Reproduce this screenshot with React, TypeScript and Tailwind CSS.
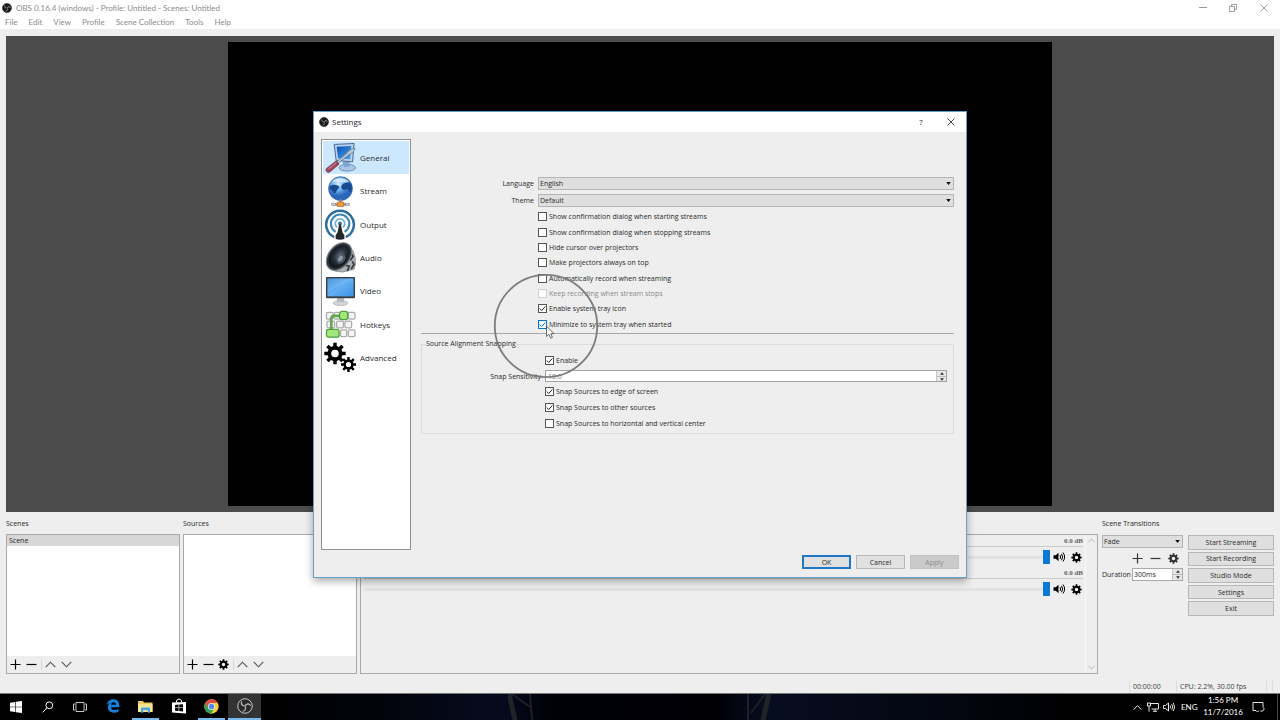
import type { ReactNode } from "react";

function gearPath(cx: number, cy: number, outer: number, root: number, hole: number, teeth: number) {
  const step = (Math.PI * 2) / teeth;
  const pt = (r: number, a: number) => `${(cx + r * Math.cos(a)).toFixed(2)} ${(cy + r * Math.sin(a)).toFixed(2)}`;
  let d = "";
  for (let i = 0; i < teeth; i++) {
    const a = i * step - Math.PI / 2;
    d += `${i === 0 ? "M" : "L"}${pt(root, a - step * 0.3)}L${pt(outer, a - step * 0.2)}L${pt(outer, a + step * 0.2)}L${pt(root, a + step * 0.3)}`;
  }
  d += `ZM${cx - hole} ${cy}a${hole} ${hole} 0 1 0 ${hole * 2} 0a${hole} ${hole} 0 1 0 ${-hole * 2} 0Z`;
  return d;
}

const SMALL_GEAR = gearPath(12, 12, 11.5, 8.6, 3.8, 8);

function Gear({ className = "size-[11px]" }: { className?: string }) {
  return (
    <svg viewBox="0 0 24 24" className={className} fill="currentColor" fillRule="evenodd" aria-hidden="true">
      <path d={SMALL_GEAR} />
    </svg>
  );
}

function Plus() {
  return (
    <svg viewBox="0 0 11 11" className="size-[11px]" stroke="currentColor" strokeWidth="1.2" aria-hidden="true">
      <path d="M5.5 .5v10M.5 5.5h10" />
    </svg>
  );
}

function Minus() {
  return (
    <svg viewBox="0 0 11 11" className="size-[11px]" stroke="currentColor" strokeWidth="1.2" aria-hidden="true">
      <path d="M.5 5.5h10" />
    </svg>
  );
}

function Chevron({ up = false, className = "size-[11px]" }: { up?: boolean; className?: string }) {
  return (
    <svg viewBox="0 0 11 11" className={className} fill="none" stroke="currentColor" strokeWidth="1.1" aria-hidden="true">
      <path d={up ? "M.7 8.2l4.8-5 4.8 5" : "M.7 2.8l4.8 5 4.8-5"} />
    </svg>
  );
}

function Speaker() {
  return (
    <svg viewBox="0 0 24 20" className="h-[10px] w-3" aria-hidden="true">
      <path d="M1 6.500h4.500L11 1.500v17L5.500 13.500H1z" fill="#000" />
      <path d="M14 6q2.500 4 0 8M17 3.500q4.500 6.500 0 13M20 1q6.500 9 0 18" fill="none" stroke="#000" strokeWidth="2" />
    </svg>
  );
}

const BLADE = "M10.500 5.500c-2 5.500.5 9 5.500 9.800l.5 1.700c-5 .5-9.500-3-9-7.500.3-2 1.500-3.300 3-4z";

function ObsLogo({ className, tone = "dark" }: { className: string; tone?: "dark" | "outline" }) {
  const outline = tone === "outline";
  return (
    <svg viewBox="0 0 32 32" className={className} aria-hidden="true">
      <circle cx="16" cy="16" r="14.500" fill={outline ? "#2a2a2b" : "#17181a"} stroke={outline ? "#c9c9c9" : "#2b2c2e"} strokeWidth="2" />
      <g fill={outline ? "#b9b9b9" : "#85878a"}>
        <path d={BLADE} />
        <path d={BLADE} transform="rotate(120 16 16)" />
        <path d={BLADE} transform="rotate(240 16 16)" />
      </g>
    </svg>
  );
}

function IconButton({ label, children, className = "" }: { label: string; children: ReactNode; className?: string }) {
  return (
    <button type="button" aria-label={label} className={`flex h-4 items-center justify-center ${className}`}>
      {children}
    </button>
  );
}

function Select({ id, value, className = "" }: { id: string; value: string; className?: string }) {
  return (
    <div className={`relative ${className}`}>
      <select id={id} defaultValue={value} className="block h-[13px] w-full appearance-none border border-[#b4b4b4] bg-[#dfdfdf] pl-px text-[7px] leading-[11px] outline-none">
        <option>{value}</option>
      </select>
      <svg viewBox="0 0 6 4" className="pointer-events-none absolute top-[5px] right-[3px] h-[3px] w-[5px]" aria-hidden="true">
        <path d="M0 0h6L3 4z" fill="#000" />
      </svg>
    </div>
  );
}

function SpinArrows() {
  return (
    <span className="flex w-[10px] flex-col border-l border-[#c8c8c8] bg-[#e6e6e6]">
      <button type="button" aria-label="Increase" className="flex flex-1 items-center justify-center border-b border-[#bdbdbd]">
        <svg viewBox="0 0 6 4" className="h-[3px] w-1"><path d="M0 4h6L3 0z" fill="#333" /></svg>
      </button>
      <button type="button" aria-label="Decrease" className="flex flex-1 items-center justify-center">
        <svg viewBox="0 0 6 4" className="h-[3px] w-1"><path d="M0 0h6L3 4z" fill="#333" /></svg>
      </button>
    </span>
  );
}

type CheckProps = { label: string; checked?: boolean; disabled?: boolean; hot?: boolean };

function Check({ label, checked = false, disabled = false, hot = false }: CheckProps) {
  const box = disabled ? "border-[#cfcfcf]" : hot ? "border-[#0078d7]" : "border-[#555]";
  return (
    <label className={`flex items-center gap-[2px] ${disabled ? "text-[#8b8b8b]" : ""}`}>
      <span className="grid size-[9px] *:col-start-1 *:row-start-1">
        <input type="checkbox" defaultChecked={checked} disabled={disabled} className={`peer size-[9px] appearance-none border bg-white ${box}`} />
        <svg viewBox="0 0 9 9" className={`pointer-events-none invisible size-[9px] peer-checked:visible ${hot ? "text-[#0078d7]" : "text-[#222]"}`} fill="none" stroke="currentColor" strokeWidth="1">
          <path d="M1.800 4.600l1.900 1.900 3.600-4" />
        </svg>
      </span>
      <span className="whitespace-nowrap">{label}</span>
    </label>
  );
}

const GeneralIcon = () => (
  <svg viewBox="0 0 32 32" className="size-[31px]">
    <defs>
      <linearGradient id="gscreen" x1="0" y1="0" x2="1" y2="1"><stop offset="0" stopColor="#0c4fae" /><stop offset="1" stopColor="#4aa5f0" /></linearGradient>
    </defs>
    <ellipse cx="23" cy="26.500" rx="8.500" ry="3.600" fill="#a9c6e6" stroke="#5b7da8" strokeWidth=".8" />
    <path d="M18 20h7l1 5-6 1z" fill="#7fa3cd" />
    <path d="M9.500 2.500L30 1.500l-1.500 19-17-1.500z" fill="#b6d0ee" stroke="#47658e" />
    <path d="M12 5l15-.8-1 13.500-12.500-1z" fill="url(#gscreen)" />
    <path d="M31 6.500c-4 0-6 2-9.500 6L10 22l1.500 1.500 11.500-9c4-3 7.500-4 8-8z" fill="#b9c8d6" stroke="#5c6d80" strokeWidth=".7" />
    <path d="M11.500 19.500l3 3.300-9 7.700c-2.500 2-5.500-.5-4-3z" fill="#a2445c" stroke="#6a2840" strokeWidth=".8" />
    <path d="M11.500 21.500L3.500 28" stroke="#d893a4" />
  </svg>
);

const StreamIcon = () => (
  <svg viewBox="0 0 32 32" className="size-[31px]">
    <defs>
      <radialGradient id="globe" cx=".4" cy=".3"><stop offset="0" stopColor="#d6ecff" /><stop offset=".55" stopColor="#6fb0f0" /><stop offset="1" stopColor="#2a66bb" /></radialGradient>
    </defs>
    <circle cx="16" cy="13" r="12.300" fill="url(#globe)" stroke="#2c5ea5" strokeWidth=".8" />
    <path d="M4.500 11c2-2 6-2.500 9-1 2.500 1.500 0 3-1 4.500-1 1-1 3-2.500 3.500-2 0-2-3-3.500-3.500-1.500-.5-2-2-2-3.500zM17 10c2-3 6-4 10-1.500 1.500 3 1 6-.5 8-2 .5-1.500-2.500-3.500-3-2-.3-2 2-4 1-1.500-1-3-3-2-4.500z" fill="#184b8f" />
    <path d="M7 6c4-4.500 13-5 18 0-5 1.500-12-1.500-18 0z" fill="#e9f5ff" opacity=".75" />
    <path d="M16 24v4M7 29.500h18" stroke="#8a8d92" strokeWidth="2" />
    <rect x="12.500" y="26.800" width="7" height="5" rx="1" fill="#f09a3e" stroke="#a65d15" strokeWidth=".7" />
    <rect x="7" y="28" width="4" height="2.600" fill="#cfd2d6" stroke="#777" strokeWidth=".5" />
    <rect x="21" y="28" width="4" height="2.600" fill="#cfd2d6" stroke="#777" strokeWidth=".5" />
  </svg>
);

const OutputIcon = () => (
  <svg viewBox="0 0 32 32" className="size-[31px]">
    <g fill="none">
      <path d="M9.500 29a14.300 14.300 0 1 1 12 0" stroke="#2f6d9d" strokeWidth="2.600" />
      <path d="M11 23.500a9.500 9.500 0 1 1 9.200 0" stroke="#3f86b8" strokeWidth="2.200" />
      <path d="M12.500 19a4.900 4.900 0 1 1 6 0" stroke="#6fb0d8" strokeWidth="1.800" />
    </g>
    <circle cx="15.500" cy="15" r="2" fill="#3b6f96" />
    <path d="M14.500 16h2l1.500 8 2 3v4q-4.500 1.500-9 0v-4l2-3z" fill="#23262a" />
  </svg>
);

const AudioIcon = () => (
  <svg viewBox="0 0 32 32" className="size-[31px]">
    <defs>
      <radialGradient id="cone" cx=".5" cy=".45"><stop offset="0" stopColor="#66707c" /><stop offset=".5" stopColor="#2b3440" /><stop offset="1" stopColor="#11161c" /></radialGradient>
    </defs>
    <path d="M25 5c6 4 8 15 5 23l-12 3-8-1z" fill="#aeb2b6" stroke="#6b6f73" strokeWidth=".7" />
    <path d="M27 12l2 3-3 4M28 20l2 3-3 5M21 24l4 1-2 5" stroke="#34383c" strokeWidth="1.800" fill="none" />
    <ellipse cx="14.500" cy="15" rx="11" ry="16" transform="rotate(38 14.500 15)" fill="#30373f" stroke="#7d848b" strokeWidth="1" />
    <ellipse cx="14.500" cy="15" rx="9" ry="13.500" transform="rotate(38 14.500 15)" fill="url(#cone)" />
    <ellipse cx="16.500" cy="17.500" rx="4" ry="5.500" transform="rotate(38 16.500 17.500)" fill="#4d5660" />
    <ellipse cx="16" cy="17" rx="2.200" ry="3.200" transform="rotate(38 16 17)" fill="#8c959f" />
  </svg>
);

const VideoIcon = () => (
  <svg viewBox="0 0 32 32" className="size-[31px]">
    <defs>
      <linearGradient id="vscreen" x1="0" y1="0" x2="1" y2="1"><stop offset="0" stopColor="#2f86dc" /><stop offset=".5" stopColor="#62aef3" /><stop offset="1" stopColor="#3c92e6" /></linearGradient>
    </defs>
    <ellipse cx="16" cy="28" rx="7.500" ry="2.500" fill="#d4d6d9" stroke="#a5a8ac" strokeWidth=".7" />
    <path d="M12.500 22h7l.5 5h-8z" fill="#b8bbbf" />
    <rect x="1" y="1" width="30" height="22" rx="1" fill="#3b4046" />
    <rect x="2.500" y="2.500" width="27" height="18.500" fill="url(#vscreen)" />
    <path d="M2.500 2.500h27L2.500 17z" fill="#fff" opacity=".14" />
  </svg>
);

const HotkeysIcon = () => (
  <svg viewBox="0 0 32 32" className="size-[31px]">
    <g fill="#f4f4f4" stroke="#a9aba9" strokeWidth="1.300">
      <rect x="1.500" y="3.500" width="7" height="7" rx="1.500" />
      <rect x="9.500" y="3.500" width="6" height="7" rx="1.500" />
      <rect x="24" y="3.500" width="7" height="7" rx="1.500" />
      <rect x="2" y="12.500" width="8" height="7" rx="1.500" />
      <rect x="12" y="12.500" width="7" height="7" rx="1.500" />
      <rect x="20.500" y="12.500" width="7" height="7" rx="1.500" />
      <rect x="16" y="21.500" width="6.500" height="7" rx="1.500" />
      <rect x="24" y="21.500" width="7" height="7" rx="1.500" />
    </g>
    <path d="M6.500 21V10q0-3 3-3h7" fill="none" stroke="#63a852" strokeWidth="2.800" />
    <g fill="#a5e57d" stroke="#4f9f3a" strokeWidth="1.300">
      <rect x="15" y="2.500" width="8.500" height="8.500" rx="2.500" />
      <rect x="1.500" y="21" width="13" height="8" rx="2" />
    </g>
  </svg>
);

const AdvancedIcon = () => (
  <svg viewBox="0 0 32 32" className="size-8" fillRule="evenodd">
    <path d={gearPath(11, 11.5, 10.8, 7.6, 3.8, 8)} />
    <path d={gearPath(24.5, 22.5, 7.6, 5.2, 2.6, 8)} />
  </svg>
);

const CATEGORIES: { name: string; icon: () => ReactNode }[] = [
  { name: "General", icon: GeneralIcon },
  { name: "Stream", icon: StreamIcon },
  { name: "Output", icon: OutputIcon },
  { name: "Audio", icon: AudioIcon },
  { name: "Video", icon: VideoIcon },
  { name: "Hotkeys", icon: HotkeysIcon },
  { name: "Advanced", icon: AdvancedIcon },
];

const GENERAL_CHECKS: CheckProps[] = [
  { label: "Show confirmation dialog when starting streams" },
  { label: "Show confirmation dialog when stopping streams" },
  { label: "Hide cursor over projectors" },
  { label: "Make projectors always on top" },
  { label: "Automatically record when streaming" },
  { label: "Keep recording when stream stops", disabled: true },
  { label: "Enable system tray icon", checked: true },
  { label: "Minimize to system tray when started", checked: true, hot: true },
];

function SettingsDialog() {
  return (
    <section role="dialog" aria-label="Settings" className="absolute top-[111px] left-1/2 flex h-[467px] w-[654px] -translate-x-1/2 flex-col border border-[#5fa3cf] bg-[#eee] shadow-[0_3px_8px_rgba(0,0,0,0.35)]">
      <header className="flex h-5 items-center bg-white pl-[5px] text-[8px]">
        <ObsLogo className="size-[10px]" />
        <h2 className="ml-[3px] flex-1">Settings</h2>
        <button type="button" aria-label="Help" className="w-[30px] text-[8px]">?</button>
        <button type="button" aria-label="Close" className="flex w-[30px] justify-center">
          <svg viewBox="0 0 8 8" className="size-2" stroke="#333" strokeWidth=".9"><path d="M.5.500l7 7M7.500.500l-7 7" /></svg>
        </button>
      </header>
      <div className="flex min-h-0 flex-1 px-[7px] pt-[7px]">
        <nav className="h-[411px] w-[90px] border border-[#8d9199] bg-white p-px">
          <ul className="grid h-[234px] grid-rows-7">
            {CATEGORIES.map(({ name, icon: Icon }, i) => (
              <li key={name} className="min-h-0">
                <button type="button" className={`flex h-full w-full items-center gap-1 pl-px text-[8px] ${i === 0 ? "bg-[#cce8ff]" : ""}`}>
                  <span className="flex w-8 shrink-0 justify-center"><Icon /></span>
                  {name}
                </button>
              </li>
            ))}
          </ul>
        </nav>
        <form className="ml-[10px] flex flex-1 flex-col pt-[38px] pr-[5px]">
          <div className="grid grid-cols-[113px_1fr] items-center gap-x-1 gap-y-1">
            <label htmlFor="language" className="text-right">Language</label>
            <Select id="language" value="English" />
            <label htmlFor="theme" className="text-right">Theme</label>
            <Select id="theme" value="Default" />
          </div>
          <div className="mt-[2px] ml-[117px] grid h-[123px] grid-rows-8">
            {GENERAL_CHECKS.map((c) => <Check key={c.label} {...c} />)}
          </div>
          <hr className="mt-px border-t border-[#a8a8a8]" />
          <fieldset className="mt-[5px] min-w-0 border border-[#dcdcdc] pr-[6px] pb-[2px]">
            <legend className="ml-[4px] h-[10px] leading-[10px]">Source Alignment Snapping</legend>
            <div className="mt-1 grid h-[78px] grid-cols-[119px_1fr] grid-rows-5 items-center gap-x-[4px]">
              <span className="col-start-2"><Check label="Enable" checked /></span>
              <label htmlFor="sensitivity" className="text-right">Snap Sensitivity</label>
              <span className="flex h-3 border border-[#a2a2a2] bg-white">
                <input id="sensitivity" defaultValue="10.0" className="min-w-0 flex-1 pl-[2px] text-[7px] leading-none text-[#777] outline-none" />
                <SpinArrows />
              </span>
              <span className="col-start-2"><Check label="Snap Sources to edge of screen" checked /></span>
              <span className="col-start-2"><Check label="Snap Sources to other sources" checked /></span>
              <span className="col-start-2"><Check label="Snap Sources to horizontal and vertical center" /></span>
            </div>
          </fieldset>
        </form>
      </div>
      <footer className="flex justify-end gap-[5px] px-[7px] pb-2">
        <button type="button" className="h-[14px] w-[49px] border-2 border-[#1f78c4] bg-[#e1e1e1] leading-none">OK</button>
        <button type="button" className="h-[14px] w-[49px] border border-[#b8b8b8] bg-[#e1e1e1] leading-none">Cancel</button>
        <button type="button" disabled className="h-[14px] w-[49px] border border-[#c2c2c2] bg-[#cacaca] leading-none text-[#8d8d8d]">Apply</button>
      </footer>
      <svg viewBox="0 0 106 106" className="pointer-events-none absolute top-[161px] left-[179px] size-[106px]" aria-hidden="true">
        <circle cx="53" cy="53" r="51.200" fill="none" stroke="#7c7c7c" strokeWidth="1.800" />
        <path d="M53.500 53v10.500l2.400-2.200 1.800 3.900 1.700-.8-1.700-3.700h3.200z" fill="#fff" stroke="#333" strokeWidth=".7" />
      </svg>
    </section>
  );
}

function Dock({ title, children }: { title: string; children: ReactNode }) {
  return (
    <section className="flex w-[174px] flex-col">
      <h3 className="flex h-[22px] items-center">{title}</h3>
      <div className="flex flex-1 flex-col border border-[#a9a9a9] bg-white">{children}</div>
    </section>
  );
}

function DockTools({ gear = false }: { gear?: boolean }) {
  return (
    <div className="mt-auto flex h-[17px] items-center gap-[5px] bg-[#eee] pl-[3px] text-black">
      <IconButton label="Add"><Plus /></IconButton>
      <IconButton label="Remove"><Minus /></IconButton>
      {gear && <IconButton label="Properties" className="-ml-px"><Gear /></IconButton>}
      <span className="-mr-[2px] -ml-px h-[10px] w-px bg-[#d5d5d5]" />
      <span className="flex gap-[5px] text-[#555]">
        <IconButton label="Move up"><Chevron up /></IconButton>
        <IconButton label="Move down"><Chevron /></IconButton>
      </span>
    </div>
  );
}

function MixerRow({ name }: { name: string }) {
  return (
    <div className="h-8">
      <div className="flex h-3 items-end justify-end border-b border-[#cbcbcb] pb-px font-['Liberation_Serif',serif] text-[7px] font-bold text-[#666]">0.0 dB</div>
      <div className="flex h-5 items-center">
        <input
          type="range"
          aria-label={name}
          defaultValue={100}
          className="h-[14px] min-w-0 flex-1 appearance-none bg-[linear-gradient(#e2e2e2,#e2e2e2)] bg-[length:100%_3px] bg-center bg-no-repeat [&::-webkit-slider-thumb]:h-[14px] [&::-webkit-slider-thumb]:w-[7px] [&::-webkit-slider-thumb]:appearance-none [&::-webkit-slider-thumb]:bg-[#0b78d6]"
        />
        <button type="button" aria-label={`Mute ${name}`} className="ml-[3px]"><Speaker /></button>
        <button type="button" aria-label={`${name} settings`} className="mr-px ml-[6px] text-black"><Gear /></button>
      </div>
    </div>
  );
}

const CONTROLS = ["Start Streaming", "Start Recording", "Studio Mode", "Settings", "Exit"];

const MENUS = ["File", "Edit", "View", "Profile", "Scene Collection", "Tools", "Help"];

function ObsWindow() {
  return (
    <main className="flex min-h-0 flex-1 flex-col bg-[#eee]">
      <header className="bg-white font-['Lato',sans-serif] text-[8px] text-[#8c8c8c]">
        <div className="flex h-[15px] items-center pl-[2px]">
          <ObsLogo className="size-[10px]" />
          <h1 className="ml-[4px] flex-1">OBS 0.16.4 (windows) - Profile: Untitled - Scenes: Untitled</h1>
          <button type="button" aria-label="Minimize" className="flex w-[30px] justify-center"><svg viewBox="0 0 8 8" className="size-2" stroke="#999"><path d="M0 3.500h8" /></svg></button>
          <button type="button" aria-label="Restore" className="flex w-[30px] justify-center"><svg viewBox="0 0 8 8" className="size-2" fill="none" stroke="#888" strokeWidth=".8"><path d="M.5 2.500h5v5h-5zM2.500 2.500v-2h5v5h-2" /></svg></button>
          <button type="button" aria-label="Close" className="flex w-[32px] justify-center"><svg viewBox="0 0 8 8" className="size-2" stroke="#888" strokeWidth=".8"><path d="M.5.500l7 7M7.500.500l-7 7" /></svg></button>
        </div>
        <nav className="flex h-[14px] items-center gap-[11px] pl-[5px]">
          {MENUS.map((m) => (
            <button type="button" key={m}>{m}</button>
          ))}
        </nav>
      </header>
      <div className="mx-[6px] mt-[7px] flex min-h-0 flex-1 items-center justify-center bg-[#4c4c4c] py-[6px]">
        <div className="aspect-video h-full bg-black" />
      </div>
      <div className="flex h-[162px] gap-[3px] px-[6px]">
        <Dock title="Scenes">
          <ul><li className="flex h-[11px] items-center bg-[#d7d7d7] pl-[2px]">Scene</li></ul>
          <DockTools />
        </Dock>
        <Dock title="Sources"><DockTools gear /></Dock>
        <section className="flex min-w-0 flex-1 flex-col pt-[22px]" aria-label="Mixer">
          <div className="flex flex-1 border border-[#a9a9a9]">
            <div className="min-w-0 flex-1 pr-[2px] pl-[3px]">
              <MixerRow name="Desktop Audio" />
              <MixerRow name="Mic/Aux" />
            </div>
            <div className="flex w-3 flex-col items-center justify-between border-l border-[#f8f8f8] py-[2px] text-[#999]">
              <Chevron up className="size-[7px]" />
              <Chevron className="size-[7px]" />
            </div>
          </div>
        </section>
        <section className="ml-px w-[81px]">
          <h3 className="flex h-[23px] items-center whitespace-nowrap">Scene Transitions</h3>
          <Select id="transition" value="Fade" />
          <div className="mt-[2px] flex justify-end gap-[7px] pr-[4px] text-[#333]">
            <IconButton label="Add transition"><Plus /></IconButton>
            <IconButton label="Remove transition"><Minus /></IconButton>
            <IconButton label="Transition properties"><Gear /></IconButton>
          </div>
          <div className="mt-[2px] flex items-center justify-between">
            <label htmlFor="duration">Duration</label>
            <span className="flex h-[13px] w-[51px] border border-[#a9a9a9] bg-white">
              <input id="duration" defaultValue="300ms" className="min-w-0 flex-1 pl-px text-[7px] outline-none" />
              <SpinArrows />
            </span>
          </div>
        </section>
        <section className="ml-[2px] w-[86px] pt-[23px]" aria-label="Controls">
          <div className="grid h-[81px] grid-rows-5 gap-[2px]">
            {CONTROLS.map((c) => (
              <button type="button" key={c} className="min-h-0 border border-[#b6b6b6] bg-[#dfdfdf] leading-none">{c}</button>
            ))}
          </div>
        </section>
      </div>
      <footer className="flex h-[19px] items-end justify-end pb-px leading-[11px] text-[#444]">
        <span className="w-[47px] border-l border-[#ddd] pl-[3px]">00:00:00</span>
        <span className="w-[90px] border-l border-[#ddd] pl-[3px]">CPU: 2.2%, 30.00 fps</span>
        <span className="h-[11px] w-[7px] border-x border-[#ddd]" />
        <span className="w-[7px]" />
      </footer>
    </main>
  );
}

function TaskButton({ label, running = false, active = false, children }: { label: string; running?: boolean; active?: boolean; children: ReactNode }) {
  return (
    <button type="button" aria-label={label} className={`flex w-[33px] flex-col items-center ${active ? "bg-[#333336]" : ""}`}>
      <span className="flex flex-1 items-center">{children}</span>
      <span className={`h-[2px] ${active ? "w-full" : "w-[27px]"} ${running ? "bg-[#76b9ed]" : ""}`} />
    </button>
  );
}

function Taskbar() {
  return (
    <footer className="relative flex h-[27px] border-t border-[#77787a] bg-[linear-gradient(90deg,#000_20%,#02040c_30%,#070b1e_39%,#000008_43%,#000005_56%,#070d20_60%,#03060f_75%,#000_84%)] text-white">
      <svg viewBox="0 0 264 26" className="pointer-events-none absolute top-0 left-[508px] h-[26px] w-[264px]" fill="none" aria-hidden="true">
        <path d="M1 0l6 26" stroke="#202327" strokeWidth="5" />
        <path d="M4 0l18 13M22 0l2 26" stroke="#1d2024" strokeWidth="2" />
        <path d="M261 0l-6 26" stroke="#202327" strokeWidth="5" />
        <path d="M257 0l-14 19M240 0v26" stroke="#1d2024" strokeWidth="2" />
      </svg>
      <div className="flex">
        <button type="button" aria-label="Start" className="flex w-8 items-center justify-center">
          <svg viewBox="0 0 12 12" className="size-3" fill="#fff"><path d="M0 1.700l5.200-.8v4.800H0zM5.800.8L12 0v5.700H5.800zM0 6.300h5.200v4.800L0 10.300zM5.800 6.300H12V12l-6.200-.8z" /></svg>
        </button>
        <button type="button" aria-label="Search" className="flex w-8 items-center justify-center">
          <svg viewBox="0 0 12 12" className="size-3" fill="none" stroke="#fff"><circle cx="7.300" cy="4.300" r="3.400" /><path d="M4.900 6.800L.6 11.400" /></svg>
        </button>
        <button type="button" aria-label="Task view" className="flex w-8 items-center justify-center">
          <svg viewBox="0 0 14 10" className="h-[10px] w-[14px]" fill="none" stroke="#ddd" strokeWidth=".9"><path d="M3 .5h8v9H3zM2 2H.5v6H2M12 2h1.500v6H12" /></svg>
        </button>
      </div>
      <div className="flex">
        <TaskButton label="Edge">
          <svg viewBox="0 0 24 24" className="size-[14px]"><path d="M1.200 10.700C2 4.500 6.500.5 12.600.5 19 .5 22.800 5 22.800 11v3H8.300c.2 3.300 3 5 6.500 5 2.500 0 4.700-.7 6.700-1.900v4.700c-2.200 1.200-4.800 1.800-7.700 1.800-6.500 0-10.600-3.700-10.600-9.300 0-3.700 2-6.900 5.400-8.500C5.500 6.500 3 8 1.200 10.700zm7.200-.9h8.800c0-2.600-1.400-4.300-4.200-4.300-2.600 0-4.200 1.700-4.600 4.300z" fill="#1281de" /></svg>
        </TaskButton>
        <TaskButton label="File Explorer" running>
          <svg viewBox="0 0 15 13" className="h-[13px] w-[15px]"><path d="M0 1h5l1 1.500h8.500V12H0z" fill="#eecb62" /><path d="M0 4h14.500v8H0z" fill="#fbe493" /><path d="M3 12.800V7.500h9v5.300H9.800V10H5.200v2.800z" fill="#48a7dc" /></svg>
        </TaskButton>
        <TaskButton label="Store">
          <svg viewBox="0 0 14 16" className="h-4 w-[14px]"><path d="M4.500 4.500V2.300Q7 -.5 9.500 2.300v2.200" fill="none" stroke="#fff" /><path d="M0 4.500L14 4v11.500L0 14.500z" fill="#fff" /><path d="M3 6.900l3.600-.3v2.900H3zM7.200 6.500L11 6.200v3.300H7.200zM3 10.100h3.600v2.900L3 12.700zM7.200 10.100H11v3.300l-3.800-.3z" fill="#000" /></svg>
        </TaskButton>
        <TaskButton label="Chrome" running>
          <svg viewBox="0 0 24 24" className="size-[15px]">
            <circle cx="12" cy="12" r="11.500" fill="#f9cf36" />
            <path d="M2 6.300A11.500 11.500 0 0 1 22 6.300H12L7 15z" fill="#dc4b3e" />
            <path d="M2 6.300A11.500 11.500 0 0 0 11 23.500L17 14.500 12 17 7 15z" fill="#2fa254" />
            <circle cx="12" cy="12" r="5.500" fill="#f4f4f4" /><circle cx="12" cy="12" r="4.300" fill="#4a8af0" />
          </svg>
        </TaskButton>
        <TaskButton label="OBS" running active><ObsLogo className="size-4" tone="outline" /></TaskButton>
      </div>
      <div className="ml-auto flex items-center font-['Lato',sans-serif] text-[8px]">
        <Chevron up className="size-[9px]" />
        <svg viewBox="0 0 12 10" className="ml-[5px] h-[10px] w-3" fill="none" stroke="#fff" strokeWidth=".9"><path d="M3.500 1.500h8v5.500h-7M6 9.300h4M8 7v2M.5 1h3v3h-3zM2 4v5.500" /></svg>
        <svg viewBox="0 0 12 10" className="ml-1 h-[10px] w-3" fill="none" stroke="#fff" strokeWidth=".9"><path d="M.5 3.500h2l3-2.500v8l-3-2.500h-2zM7 3.500q1 1.500 0 3M8.700 2.200q2 2.800 0 5.600M10.300 1q2.600 4 0 8" /></svg>
        <span className="ml-[6px] w-4">ENG</span>
        <time className="ml-[5px] flex w-[42px] flex-col items-center pb-[2px] leading-3"><span>1:56 PM</span><span>11/7/2016</span></time>
        <svg viewBox="0 0 13 12" className="ml-[8px] h-3 w-[13px]" fill="none" stroke="#fff" strokeWidth=".9"><path d="M7 9.500L5.500 11 4 9.500H1V1.500h10v5" /><path d="M8.500 10a2.500 2.500 0 0 0 3.300-3.300" /></svg>
        <span className="ml-3 h-[26px] w-[3px] border-l border-[#444]" />
      </div>
    </footer>
  );
}

export default function App() {
  return (
    <div className="relative flex h-screen flex-col overflow-hidden font-['Open_Sans',sans-serif] text-[7px] leading-none text-[#2a2a2a]">
      <ObsWindow />
      <Taskbar />
      <SettingsDialog />
    </div>
  );
}
